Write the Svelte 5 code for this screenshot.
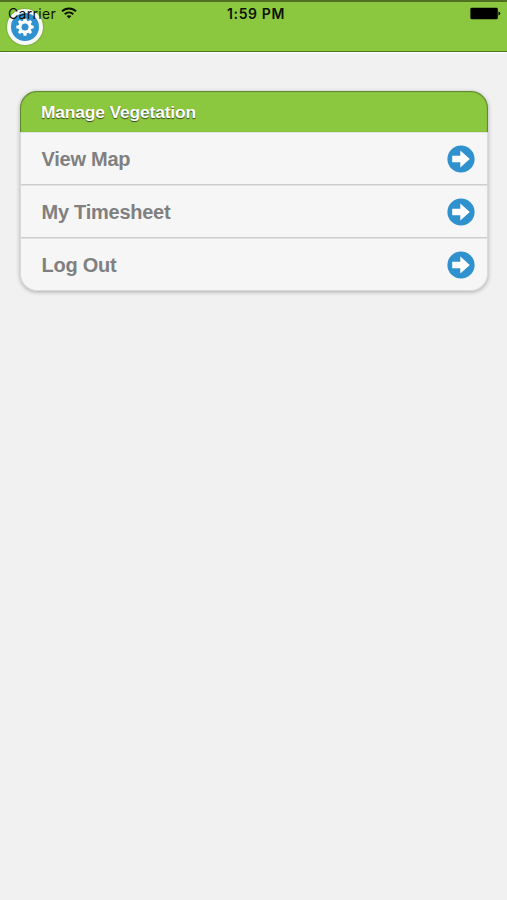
<script lang="ts">
  const title = 'Manage Vegetation';
  const items: string[] = ['View Map', 'My Timesheet', 'Log Out'];
  const teeth = [0, 45, 90, 135, 180, 225, 270, 315];
</script>

<div class="screen">
  <header class="navbar">
    <button class="settings" aria-label="Settings">
      <svg viewBox="-10 -10 20 20" width="20" height="20">
        {#each teeth as angle}
          <path d="M-2.2 -5.2 L-1.3 -8.7 H1.3 L2.2 -5.2 Z" transform="rotate({angle})" fill="#fff" />
        {/each}
        <circle r="5" fill="none" stroke="#fff" stroke-width="3" />
      </svg>
    </button>

    <div class="status">
      <div class="carrier">
        <span>Carrier</span>
        <svg class="wifi" viewBox="0 0 16 12" width="16" height="12">
          <g fill="none" stroke="#0b1203" stroke-width="2">
            <path d="M1 4.4 C5 .4 11 .4 15 4.4" />
            <path d="M3.7 7.2 C6.2 4.8 9.8 4.8 12.3 7.2" />
          </g>
          <path d="M5.6 9.1 C7 7.8 9 7.8 10.4 9.1 L8 11.6 Z" fill="#0b1203" />
        </svg>
      </div>
      <div class="time">1:59 PM</div>
      <svg class="battery" viewBox="0 0 31 13" width="31" height="13">
        <rect x="0.4" y="0.7" width="27.4" height="11.6" rx="1.4" fill="#000" />
        <path d="M28.5 4.5 Q30.3 5 30.3 6.5 T28.5 8.5 Z" fill="#000" />
      </svg>
    </div>
  </header>

  <main>
    <section class="menu">
      <h2>{title}</h2>
      <ul>
        {#each items as item}
          <li>
            <span>{item}</span>
            <svg class="arrow" viewBox="0 0 28 28" width="28" height="28">
              <circle cx="14" cy="14" r="13.6" fill="#2f91cd" />
              <path d="M5.2 10.8 H13.3 V5.4 L22.8 14 L13.3 22.6 V17.2 H5.2 Z" fill="#fff" />
            </svg>
          </li>
        {/each}
      </ul>
    </section>
  </main>
</div>

<style>
  :global(body) {
    margin: 0;
    background: #f1f1f1;
  }

  .screen {
    min-height: 900px;
    background: #f1f1f1;
    font-family: 'Liberation Sans', Arial, sans-serif;
  }

  .navbar {
    position: relative;
    box-sizing: border-box;
    height: 52px;
    padding: 7px 0 0 7px;
    background: #8cc83f;
    border-top: 2px solid #4f7020;
    border-bottom: 1px solid #51761f;
    box-shadow: 0 1px 2px #fff;
  }

  .settings {
    display: flex;
    align-items: center;
    justify-content: center;
    box-sizing: border-box;
    width: 36px;
    height: 36px;
    padding: 0;
    border: 4px solid #f8f8f8;
    border-radius: 50%;
    background: #2f91cd;
    box-shadow: 0 0 2px rgba(0, 0, 0, 0.35);
  }

  /* the system status bar sits over the app's own bar */
  .status {
    position: absolute;
    top: 0;
    left: 0;
    right: 0;
    display: grid;
    grid-template-columns: 1fr auto 1fr;
    align-items: center;
    height: 23px;
    padding: 0 6px 0 8px;
    font-family: Inter, sans-serif;
    font-size: 14px;
    color: #0b1203;
  }

  .carrier {
    display: flex;
    align-items: center;
    gap: 5px;
    letter-spacing: 0.3px;
  }

  .wifi {
    margin-top: -2px;
  }

  .time {
    padding-left: 3px;
    font-weight: 600;
    letter-spacing: 0.6px;
  }

  .battery {
    justify-self: end;
  }

  main {
    padding: 39px 19px 0 20px;
  }

  .menu {
    box-sizing: border-box;
    height: 200px;
    border: 1px solid #dadada;
    border-top: 0;
    border-radius: 17px;
    background: #f6f6f6;
    box-shadow: 0 1px 4px rgba(0, 0, 0, 0.3);
  }

  h2 {
    box-sizing: border-box;
    height: 41px;
    margin: 0 -1px;
    padding-left: 20px;
    border: 1px solid #5f8a32;
    border-bottom: 0;
    border-radius: 17px 17px 0 0;
    background: #8cc83f;
    box-shadow: inset 0 0 1px #5f8a32;
    color: #fff;
    font-size: 17.4px;
    line-height: 41px;
    letter-spacing: -0.15px;
    text-shadow: 0 1px 1px rgba(0, 0, 0, 0.65);
  }

  ul {
    margin: 0;
    padding: 0;
    list-style: none;
  }

  li {
    display: flex;
    align-items: center;
    justify-content: space-between;
    box-sizing: border-box;
    height: 53px;
    padding: 0 12px 0 20.5px;
    border-top: 1px solid #e2e2e2;
    border-bottom: 1px solid #cecece;
    color: #808080;
    font-size: 20px;
    font-weight: bold;
    letter-spacing: -0.25px;
  }

  li span {
    padding-top: 1px;
  }

  li:last-child {
    border-bottom-color: transparent;
  }
</style>
